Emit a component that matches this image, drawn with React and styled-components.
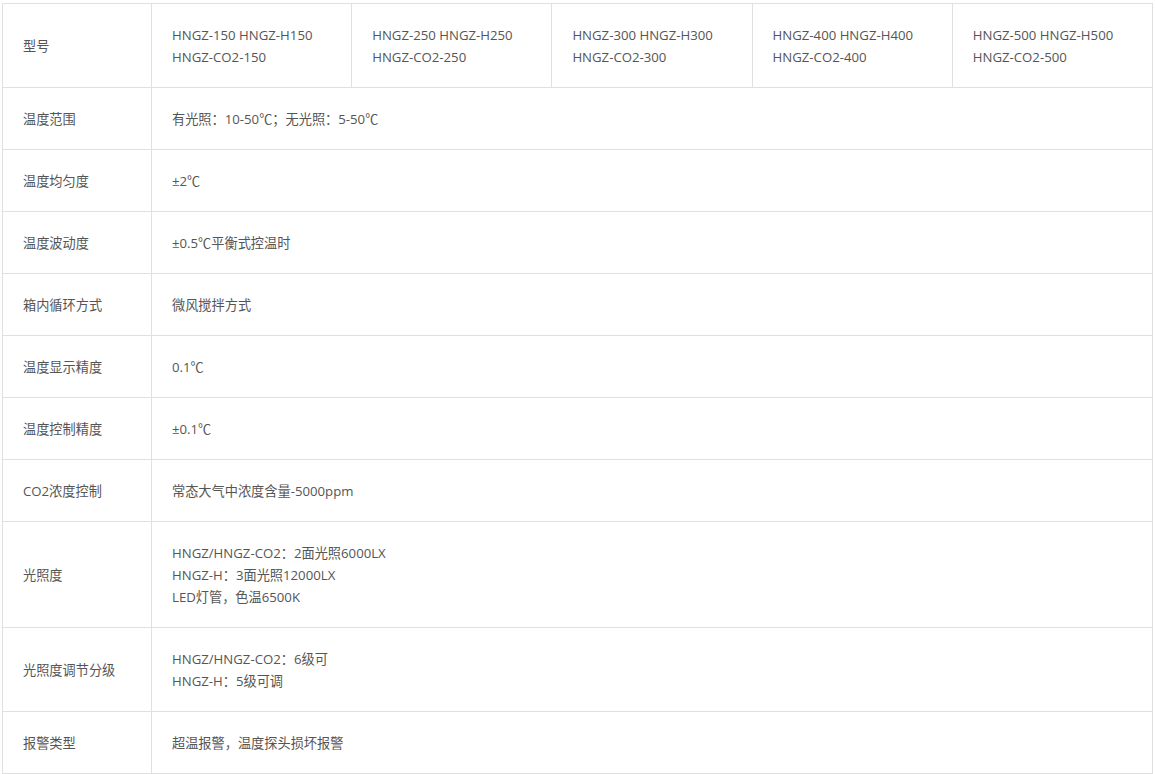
import React from 'react';
import styled, { createGlobalStyle } from 'styled-components';

const GlobalStyle = createGlobalStyle`
  body {
    margin: 0;
    padding: 3px 2px 0;
    background: #fff;
    font-family: "Open Sans", "Noto Sans CJK SC", sans-serif;
  }
`;

const SpecTable = styled.table`
  width: 1151px;
  border-collapse: collapse;
  table-layout: fixed;
  color: #555;
  font-size: 13.2px;
  line-height: 22px;
`;

const Cell = styled.td`
  border: 1px solid #e0e0e0;
  padding: 20px 20px 19px;
  vertical-align: middle;
  text-align: left;
`;

const LabelCell = styled(Cell)`
  width: 108px;
`;

const models = [150, 250, 300, 400, 500];

const specs = [
  ['温度范围', ['有光照：10-50℃；无光照：5-50℃']],
  ['温度均匀度', ['±2℃']],
  ['温度波动度', ['±0.5℃平衡式控温时']],
  ['箱内循环方式', ['微风搅拌方式']],
  ['温度显示精度', ['0.1℃']],
  ['温度控制精度', ['±0.1℃']],
  ['CO2浓度控制', ['常态大气中浓度含量-5000ppm']],
  ['光照度', ['HNGZ/HNGZ-CO2：2面光照6000LX', 'HNGZ-H：3面光照12000LX', 'LED灯管，色温6500K']],
  ['光照度调节分级', ['HNGZ/HNGZ-CO2：6级可', 'HNGZ-H：5级可调']],
  ['报警类型', ['超温报警，温度探头损坏报警']],
];

export default function App() {
  return (
    <>
      <GlobalStyle />
      <SpecTable>
        <tbody>
          <tr>
            <LabelCell>型号</LabelCell>
            {models.map((m) => (
              <Cell key={m}>
                HNGZ-{m} HNGZ-H{m}
                <br />
                HNGZ-CO2-{m}
              </Cell>
            ))}
          </tr>
          {specs.map(([label, lines]) => (
            <tr key={label}>
              <LabelCell>{label}</LabelCell>
              <Cell colSpan={5}>
                {lines.map((line, i) => (
                  <React.Fragment key={i}>
                    {i > 0 && <br />}
                    {line}
                  </React.Fragment>
                ))}
              </Cell>
            </tr>
          ))}
        </tbody>
      </SpecTable>
    </>
  );
}
